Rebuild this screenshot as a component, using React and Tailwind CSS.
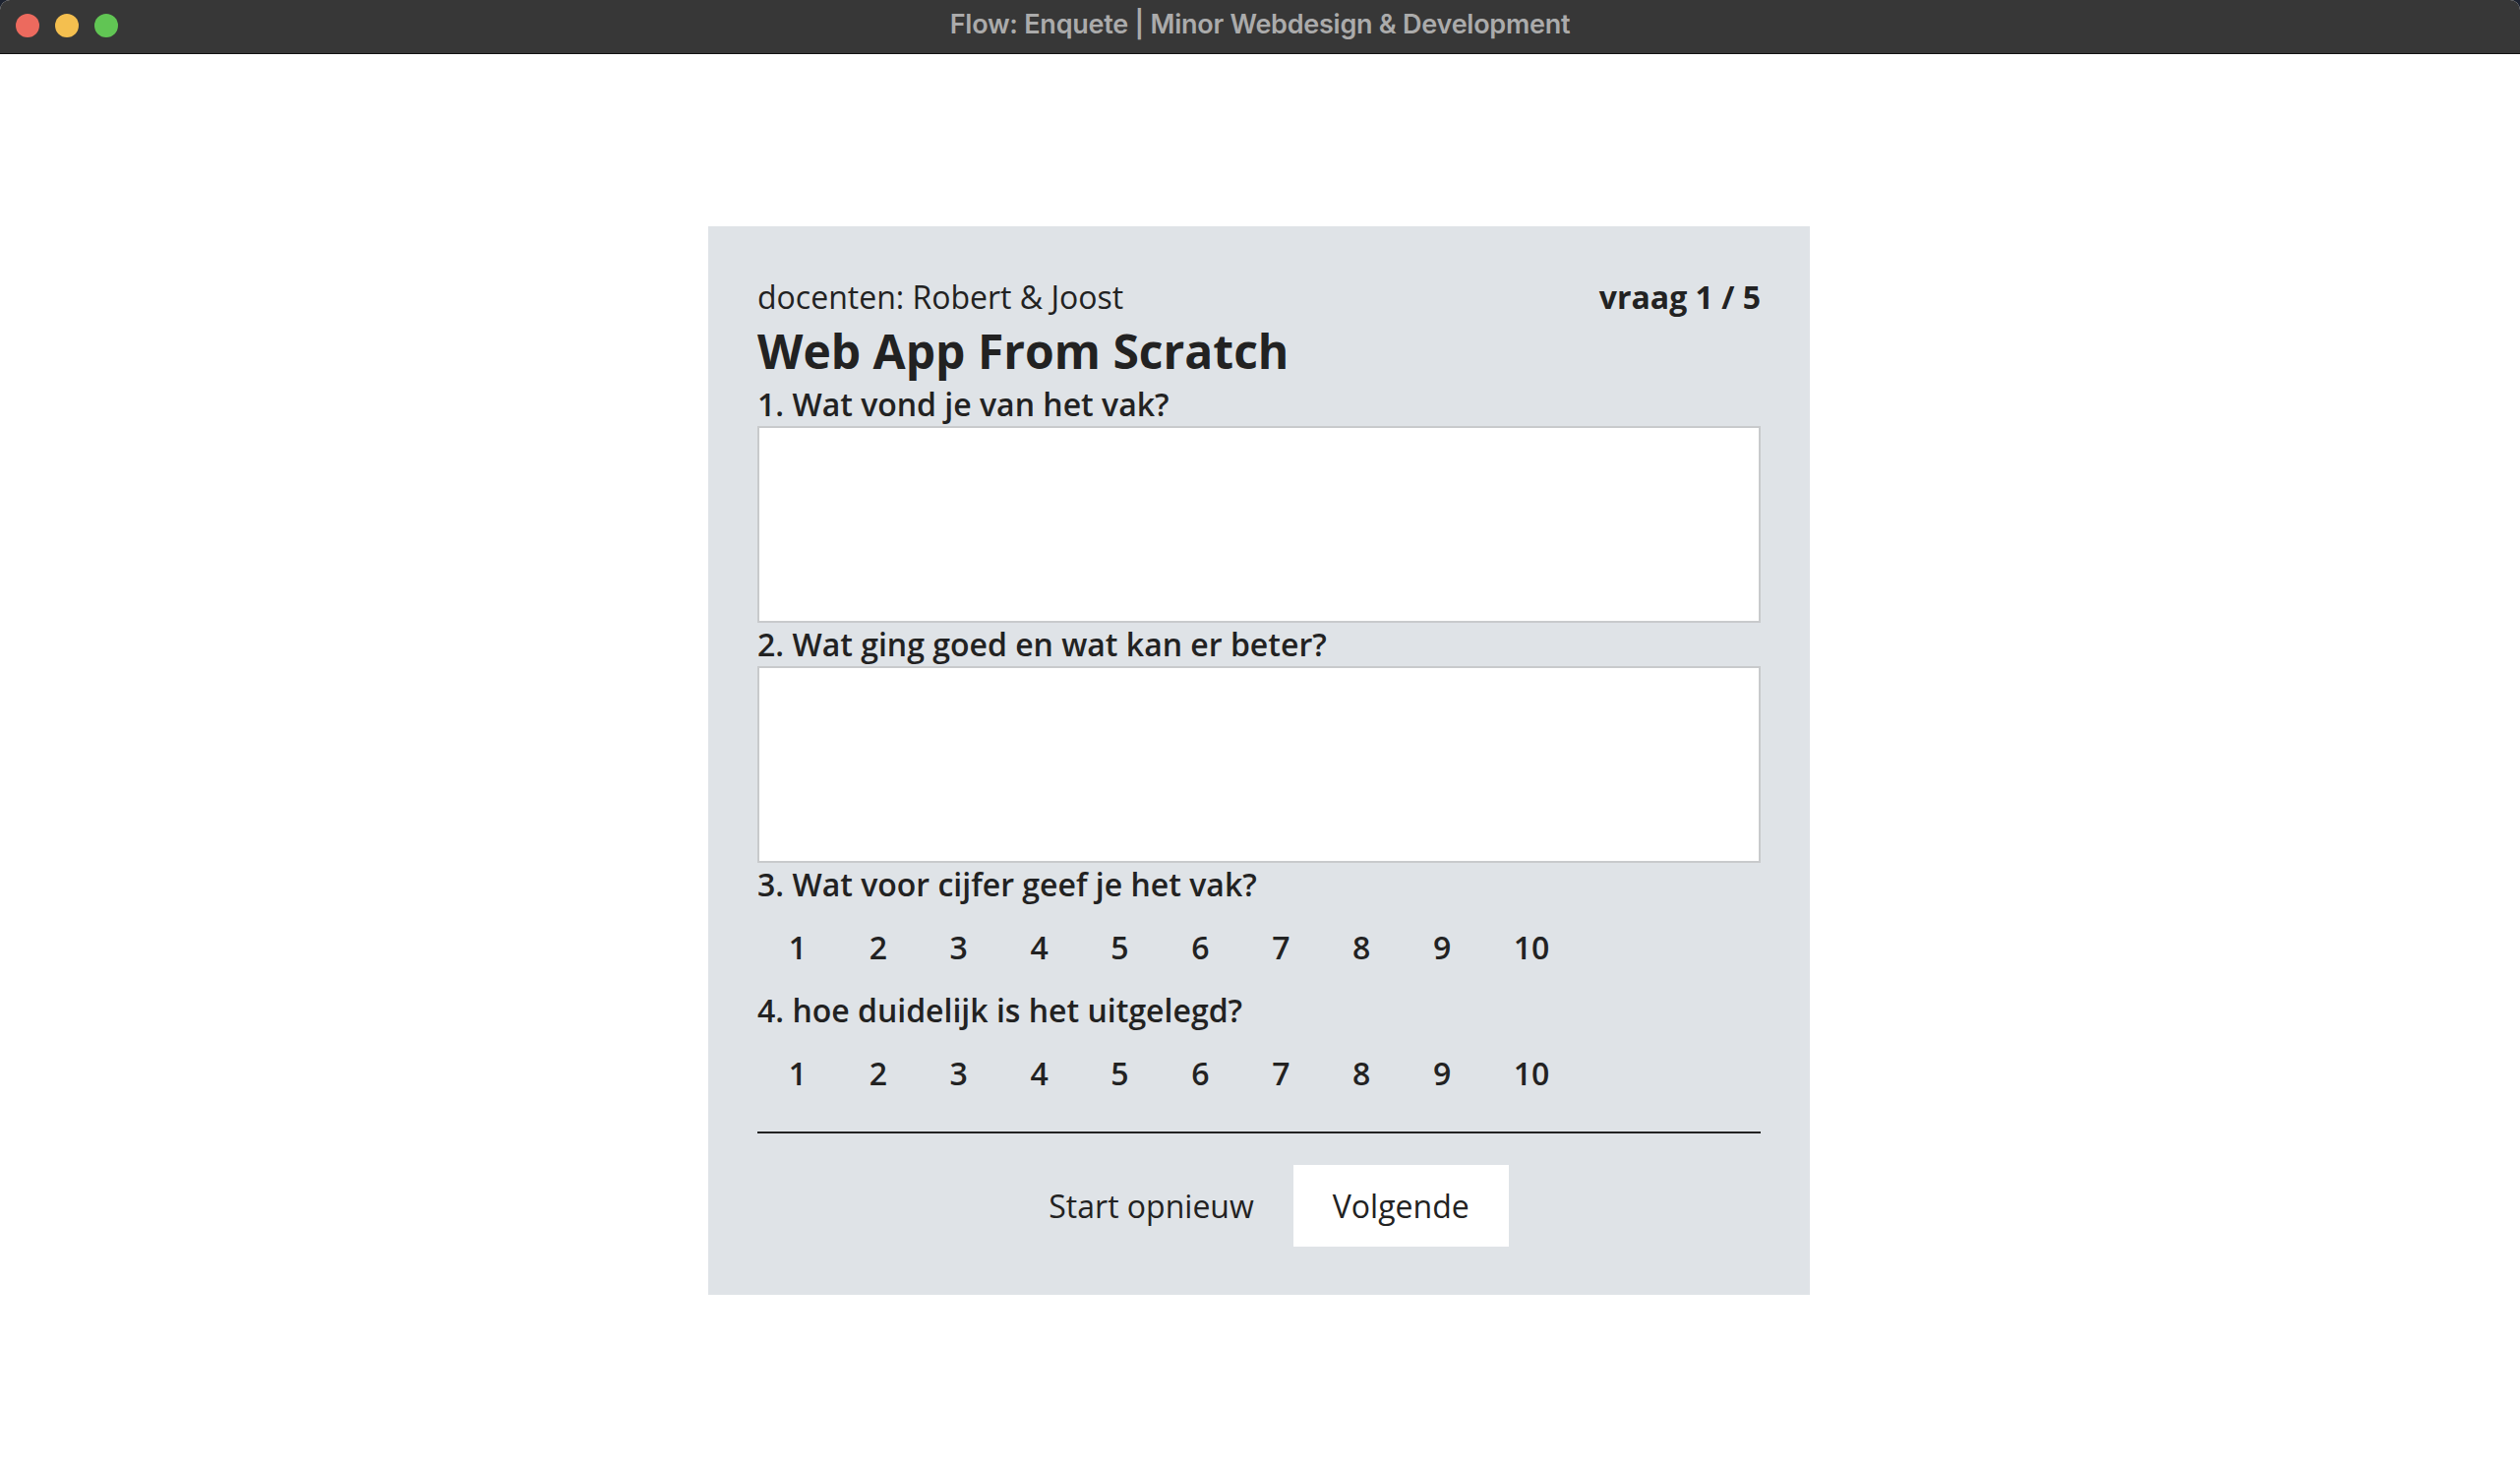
import React from "react";

const scores = [1, 2, 3, 4, 5, 6, 7, 8, 9, 10];

const ScoreRow = ({ name }) => (
  <div className="flex py-[20px]">
    {scores.map((n) => (
      <label
        key={n}
        htmlFor={`${name}-${n}`}
        className="px-[31.8px] text-[32px] leading-[44px] font-semibold text-[#222]"
      >
        {n}
      </label>
    ))}
  </div>
);

const Question = ({ children }) => (
  <p className="text-[32px] leading-[44px] font-semibold text-[#222]">{children}</p>
);

const App = () => {
  return (
    <div className="w-full h-[1492px] bg-[#1d2330] font-['Open_Sans',sans-serif]">
      <div className="w-full h-full flex flex-col bg-white rounded-t-[10px] overflow-hidden">
        {/* Window title bar */}
        <div className="relative h-[55px] bg-[#373737] border-b border-[#111] flex items-center justify-center">
          <div className="absolute left-[16px] top-[14px] flex gap-[16px]">
            <span className="w-[24px] h-[24px] rounded-full bg-[#ec6a5e]" />
            <span className="w-[24px] h-[24px] rounded-full bg-[#f4bf4f]" />
            <span className="w-[24px] h-[24px] rounded-full bg-[#61c554]" />
          </div>
          <span className="-mt-[3px] font-['Inter',sans-serif] font-semibold text-[27px] text-[#ababab] tracking-[-0.25px]">
            Flow: Enquete | Minor Webdesign &amp; Development
          </span>
        </div>

        {/* Survey card */}
        <div className="w-[1120px] ml-[720px] mt-[175px] bg-[#dfe3e7] px-[50px] pt-[50px] pb-[49px] text-[#222]">
          <div className="flex justify-between items-baseline">
            <p className="text-[32px] leading-[44px]">docenten: Robert &amp; Joost</p>
            <p className="text-[32px] leading-[44px] font-bold">vraag 1 / 5</p>
          </div>
          <h1 className="text-[48px] leading-[65px] font-bold">Web App From Scratch</h1>

          <Question>1. Wat vond je van het vak?</Question>
          <textarea className="block w-full h-[200px] bg-white border-2 border-[#c8cacc] resize-none outline-none" />

          <Question>2. Wat ging goed en wat kan er beter?</Question>
          <textarea className="block w-full h-[200px] bg-white border-2 border-[#c8cacc] resize-none outline-none" />

          <Question>3. Wat voor cijfer geef je het vak?</Question>
          <ScoreRow name="cijfer" />

          <Question>4. hoe duidelijk is het uitgelegd?</Question>
          <ScoreRow name="duidelijk" />

          <hr className="mt-[17px] border-0 border-t-2 border-[#222]" />

          <div className="flex justify-center mt-[32px]">
            <button className="px-[40px] py-[20px] text-[32px] leading-[43px] text-[#222]">
              Start opnieuw
            </button>
            <button className="px-[40px] py-[20px] text-[32px] leading-[43px] text-[#222] bg-white">
              Volgende
            </button>
          </div>
        </div>
      </div>
    </div>
  );
};

export default App;
